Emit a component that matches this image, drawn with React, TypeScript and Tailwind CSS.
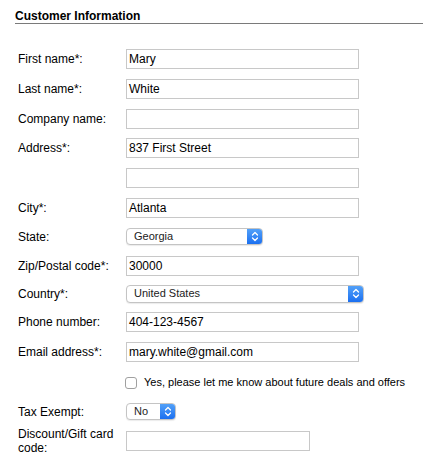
import React from 'react';

type Row = {
  label: string;
  h: string;
  kind: 'text' | 'select' | 'check';
  value?: string;
  w?: string;
};

const rows: Row[] = [
  { label: 'First name*:', h: 'h-[30px]', kind: 'text', value: 'Mary' },
  { label: 'Last name*:', h: 'h-[30px]', kind: 'text', value: 'White' },
  { label: 'Company name:', h: 'h-[29px]', kind: 'text', value: '' },
  { label: 'Address*:', h: 'h-[30px]', kind: 'text', value: '837 First Street' },
  { label: '', h: 'h-[30px]', kind: 'text', value: '' },
  { label: 'City*:', h: 'h-[29px]', kind: 'text', value: 'Atlanta' },
  { label: 'State:', h: 'h-[29px]', kind: 'select', value: 'Georgia', w: 'w-[137px] h-[17px]' },
  { label: 'Zip/Postal code*:', h: 'h-[29px]', kind: 'text', value: '30000' },
  { label: 'Country*:', h: 'h-[27px]', kind: 'select', value: 'United States', w: 'w-[238px] h-[18px]' },
  { label: 'Phone number:', h: 'h-[30px]', kind: 'text', value: '404-123-4567' },
  { label: 'Email address*:', h: 'h-[30px]', kind: 'text', value: 'mary.white@gmail.com' },
  { label: '', h: 'h-[31px]', kind: 'check', value: 'Yes, please let me know about future deals and offers' },
  { label: 'Tax Exempt:', h: 'h-[27px]', kind: 'select', value: 'No', w: 'w-[50px] h-[17px]' },
  { label: 'Discount/Gift card code:', h: 'h-[32px]', kind: 'text', value: '', w: 'w-[184px]' },
];

function Chevrons() {
  return (
    <svg width="8" height="11" viewBox="0 0 8 11" fill="none" stroke="white" strokeWidth="1.3" strokeLinecap="round" strokeLinejoin="round">
      <path d="M1.5 4 L4 1.5 L6.5 4" />
      <path d="M1.5 7 L4 9.5 L6.5 7" />
    </svg>
  );
}

function FakeSelect({ value, w }: { value: string; w: string }) {
  return (
    <div className={`flex ${w} rounded-[4px] border border-[#c4c4c4] bg-white shadow-[0_1px_1px_rgba(0,0,0,0.08)] overflow-hidden`}>
      <div className="flex-1 flex items-center pl-[7px] text-[11px] text-[#222]">{value}</div>
      <div className="w-[15px] flex items-center justify-center bg-gradient-to-b from-[#52a0f8] to-[#1a6ff0]">
        <Chevrons />
      </div>
    </div>
  );
}

export default function App() {
  return (
    <div className="w-[423px] h-[463px] bg-white text-black overflow-hidden font-['Liberation_Sans',Arial,sans-serif]">
      <div className="pl-[15px] pt-[9px]">
        <div className="text-[12px] font-bold leading-[14px]">Customer Information</div>
        <div className="border-b border-[#7a7a7a]" />
      </div>
      <div className="pt-[20px] pl-[18px]">
        {rows.map((r, i) => (
          <div key={i} className={`flex items-center ${r.h}`}>
            <div className="w-[108px] shrink-0 text-[12px] leading-[14px] pr-2">{r.label}</div>
            {r.kind === 'text' && (
              <div className={`${r.w ?? 'w-[233px]'} h-[20px] border border-[#c8c8c8] flex items-center pl-[2px] text-[12px]`}>
                {r.value}
              </div>
            )}
            {r.kind === 'select' && <FakeSelect value={r.value ?? ''} w={r.w ?? ''} />}
            {r.kind === 'check' && (
              <div className="flex items-center -ml-[1px] whitespace-nowrap">
                <div className="w-[12px] h-[12px] rounded-[3px] border border-[#a0a0a0] bg-white shrink-0" />
                <span className="ml-[7px] text-[11px]">{r.value}</span>
              </div>
            )}
          </div>
        ))}
      </div>
    </div>
  );
}
